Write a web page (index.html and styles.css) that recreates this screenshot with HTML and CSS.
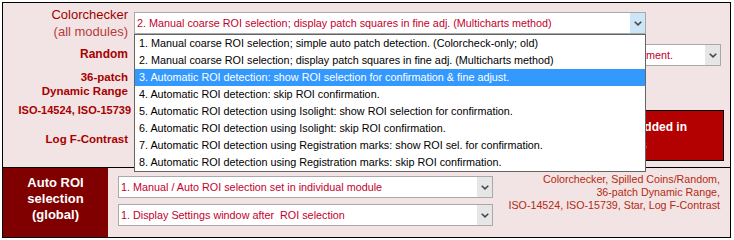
FILE: index.html
```html
<!DOCTYPE html>
<html>
<head>
<meta charset="utf-8">
<link rel="stylesheet" href="styles.css">
</head>
<body>
<div class="panel">
  <div class="row-top">
    <div class="labels">
      <div class="lbl-cc"><span class="cc-name">Colorchecker</span><span class="cc-sub">(all modules)</span></div>
      <div class="lbl lbl-random">Random</div>
      <div class="lbl lbl-36">36-patch<br>Dynamic Range</div>
      <div class="lbl lbl-iso">ISO-14524, ISO-15739</div>
      <div class="lbl lbl-log">Log F-Contrast</div>
    </div>
    <div class="controls">
      <div class="dd">
        <div class="select select-cc select-open">
          <span class="select-text">2. Manual coarse ROI selection; display patch squares in fine adj. (Multicharts method)</span>
          <span class="arrow arrow-hover"><svg width="8" height="5" viewBox="0 0 8 5"><path d="M0.7 0.7 L4 3.9 L7.3 0.7" fill="none" stroke="#4a4a4a" stroke-width="1.6"/></svg></span>
        </div>
        <ul class="list">
          <li>1. Manual coarse ROI selection; simple auto patch detection. (Colorcheck-only; old)</li>
          <li>2. Manual coarse ROI selection; display patch squares in fine adj. (Multicharts method)</li>
          <li class="hl">3. Automatic ROI detection: show ROI selection for confirmation &amp; fine adjust.</li>
          <li>4. Automatic ROI detection: skip ROI confirmation.</li>
          <li>5. Automatic ROI detection using Isolight: show ROI selection for confirmation.</li>
          <li>6. Automatic ROI detection using Isolight: skip ROI confirmation.</li>
          <li>7. Automatic ROI detection using Registration marks: show ROI sel. for confirmation.</li>
          <li>8. Automatic ROI detection using Registration marks: skip ROI confirmation.</li>
        </ul>
      </div>
      <div class="select select-random">
        <span class="select-text">3. Automatic ROI detection using Registration marks: show a ROI selection for confirmation and fine adjustment.</span>
        <span class="arrow"><svg width="8" height="5" viewBox="0 0 8 5"><path d="M0.7 0.7 L4 3.9 L7.3 0.7" fill="none" stroke="#4a4a4a" stroke-width="1.6"/></svg></span>
      </div>
      <div class="notice">
        <span class="notice-l1">Automatic ROI detection not yet added in</span>
        <span class="notice-l2">these modules</span>
      </div>
    </div>
  </div>
  <div class="row-bottom">
    <div class="cell-title">Auto ROI<br>selection<br>(global)</div>
    <div class="global-selects">
      <div class="select select-global">
        <span class="select-text">1. Manual / Auto ROI selection set in individual module</span>
        <span class="arrow"><svg width="8" height="5" viewBox="0 0 8 5"><path d="M0.7 0.7 L4 3.9 L7.3 0.7" fill="none" stroke="#4a4a4a" stroke-width="1.6"/></svg></span>
      </div>
      <div class="select select-global">
        <span class="select-text">1. Display Settings window after&nbsp; ROI selection</span>
        <span class="arrow"><svg width="8" height="5" viewBox="0 0 8 5"><path d="M0.7 0.7 L4 3.9 L7.3 0.7" fill="none" stroke="#4a4a4a" stroke-width="1.6"/></svg></span>
      </div>
    </div>
    <div class="global-note">Colorchecker, Spilled Coins/Random,<br>36-patch Dynamic Range,<br>ISO-14524, ISO-15739, Star, Log F-Contrast</div>
  </div>
</div>
</body>
</html>
```
FILE: styles.css
```css
* { box-sizing: border-box; }
body {
  margin: 0;
  background: #ffffff;
  font-family: "Liberation Sans", Arial, sans-serif;
}
.panel {
  margin: 2px 0 0 2px;
  width: 729px;
  height: 236px;
  border: 1px solid #000;
  background: #f2e4e4;
  display: flex;
  flex-direction: column;
}
.row-top {
  height: 164px;
  display: grid;
  grid-template-columns: 131px 1fr;
}
.labels {
  text-align: right;
  padding-right: 6px;
  display: flex;
  flex-direction: column;
  align-items: flex-end;
  padding-top: 3px;
  white-space: nowrap;
}
.lbl-cc {
  display: flex;
  flex-direction: column;
  align-items: flex-end;
  font-size: 13px;
  line-height: 17px;
}
.cc-name { color: #a00000; }
.cc-sub { color: #b83a3a; }
.lbl {
  font-weight: bold;
  font-size: 11.5px;
  color: #a80000;
  line-height: 14px;
}
.lbl-random { font-size: 12px; line-height: 17px; margin-top: 6px; }
.lbl-36 { margin-top: 7px; }
.lbl-iso { margin-top: 5px; margin-right: -3px; font-size: 11px; }
.lbl-log { margin-top: 15px; }

.controls {
  padding-top: 9px;
  display: flex;
  flex-direction: column;
  align-items: flex-start;
}
.dd { position: relative; }
.select {
  height: 22px;
  border: 1px solid #a9a9a9;
  background: #fff;
  display: flex;
  align-items: stretch;
  font-size: 10.8px;
  color: #c4002b;
  overflow: hidden;
}
.select-text {
  flex: 1;
  padding-left: 2px;
  line-height: 20px;
  white-space: nowrap;
  overflow: hidden;
}
.arrow {
  width: 15px;
  flex: none;
  background: #e6e6e6;
  display: flex;
  align-items: center;
  justify-content: center;
}
.arrow-hover { background: #cde6f7; }
.select-cc { width: 512px; }
.select-random { width: 587px; margin-top: 10px; }
.list {
  position: absolute;
  top: 100%;
  left: 0;
  width: 512px;
  margin: 0;
  padding: 0;
  list-style: none;
  background: #fff;
  border: 1px solid #646464;
  font-size: 10.8px;
  color: #000;
  z-index: 2;
}
.list li {
  height: 17px;
  line-height: 17px;
  padding-left: 4px;
  white-space: nowrap;
}
.list li.hl { background: #3399ff; color: #fff; }

.notice {
  margin-top: 44px;
  align-self: flex-end;
  margin-right: 6px;
  width: 424px;
  height: 51px;
  background: #b30000;
  border: 1px solid #000;
  display: flex;
  flex-direction: column;
  align-items: flex-end;
  justify-content: center;
  font-weight: bold;
  font-size: 12px;
  line-height: 18px;
  white-space: nowrap;
}
.notice-l1 { color: #fff; margin-right: 36px; }
.notice-l2 { color: #f5a000; margin-right: 76px; }

.row-bottom {
  flex: 1;
  border-top: 1px solid #000;
  display: flex;
}
.cell-title {
  width: 105px;
  background: #800000;
  color: #fff;
  font-weight: bold;
  font-size: 13px;
  line-height: 16px;
  text-align: center;
  padding-top: 7px;
}
.global-selects {
  margin-left: 10px;
  padding-top: 8px;
  display: flex;
  flex-direction: column;
  gap: 6px;
}
.select-global { width: 375px; }
.global-note {
  flex: 1;
  text-align: right;
  padding-right: 10px;
  padding-top: 5px;
  font-size: 10.7px;
  line-height: 13px;
  color: #b52a10;
  white-space: nowrap;
}
```
